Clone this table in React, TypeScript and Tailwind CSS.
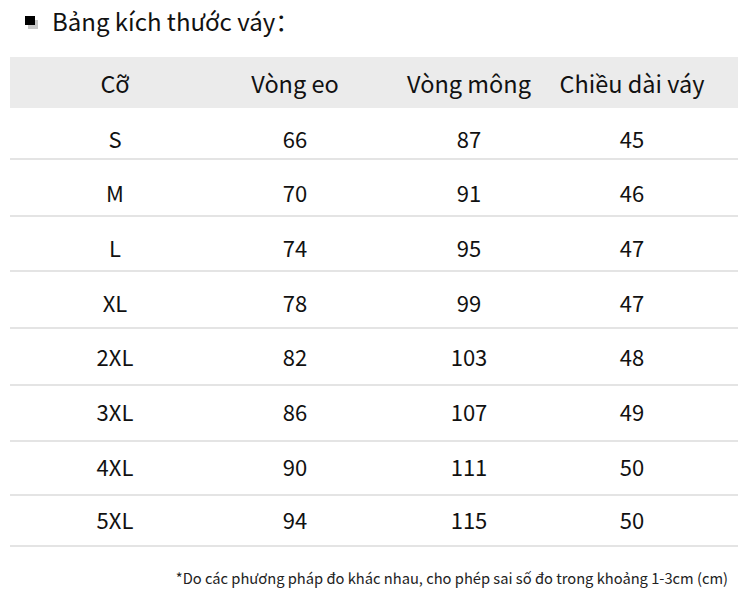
import React from "react";

const rows: { cells: string[]; cls: string }[] = [
  { cells: ["S", "66", "87", "45"], cls: "h-[52px] pt-[9px]" },
  { cells: ["M", "70", "91", "46"], cls: "h-[57px] pt-[8px]" },
  { cells: ["L", "74", "95", "47"], cls: "h-[55px] pt-[6px]" },
  { cells: ["XL", "78", "99", "47"], cls: "h-[57px] pt-[4px]" },
  { cells: ["2XL", "82", "103", "48"], cls: "h-[57px] pb-[2px]" },
  { cells: ["3XL", "86", "107", "49"], cls: "h-[56px] pb-[5px]" },
  { cells: ["4XL", "90", "111", "50"], cls: "h-[54px] pb-[5px]" },
  { cells: ["5XL", "94", "115", "50"], cls: "h-[51px] pb-[4px]" },
];

const font = { fontFamily: '"Noto Sans CJK SC", "Noto Sans", sans-serif' };

export default function App() {
  return (
    <div className="w-[750px] h-[604px] bg-white text-[#111] overflow-hidden" style={font}>
      <div className="flex items-center h-[42px] pl-[25px]">
        <div className="relative w-[13px] h-[13px] mr-[14px] mt-[2px]">
          <div className="absolute left-[3px] top-[4px] w-[10px] h-[9px] bg-[#c8c8c8]" />
          <div className="absolute left-0 top-0 w-[10px] h-[9px] bg-black" />
        </div>
        <span className="text-[24px] leading-none whitespace-nowrap">Bảng kích thước váy：</span>
      </div>
      <div className="mx-[10px] mt-[15px] w-[728px]">
        <div className="grid grid-cols-[210px_150px_198px_128px] grid-rows-[51px] h-[51px] bg-[#ebebeb] items-center text-[23.5px] leading-none whitespace-nowrap">
          <div className="flex justify-center pt-[3px]">Cỡ</div>
          <div className="flex justify-center pt-[3px]">Vòng eo</div>
          <div className="flex justify-center pt-[3px]">Vòng mông</div>
          <div className="flex justify-center pt-[3px]">Chiều dài váy</div>
        </div>
        {rows.map((r, i) => (
          <div
            key={i}
            className={`box-border grid grid-cols-[210px_150px_198px_128px] items-center text-[22px] leading-none whitespace-nowrap border-b-2 border-[#e4e4e4] ${r.cls}`}
          >
            {r.cells.map((c, j) => (
              <div key={j} className="flex justify-center">
                {c}
              </div>
            ))}
          </div>
        ))}
        <div className="flex justify-end pr-[10px] mt-[20px] text-[14.7px] text-[#222] whitespace-nowrap">
          *Do các phương pháp đo khác nhau, cho phép sai số đo trong khoảng 1-3cm (cm)
        </div>
      </div>
    </div>
  );
}
